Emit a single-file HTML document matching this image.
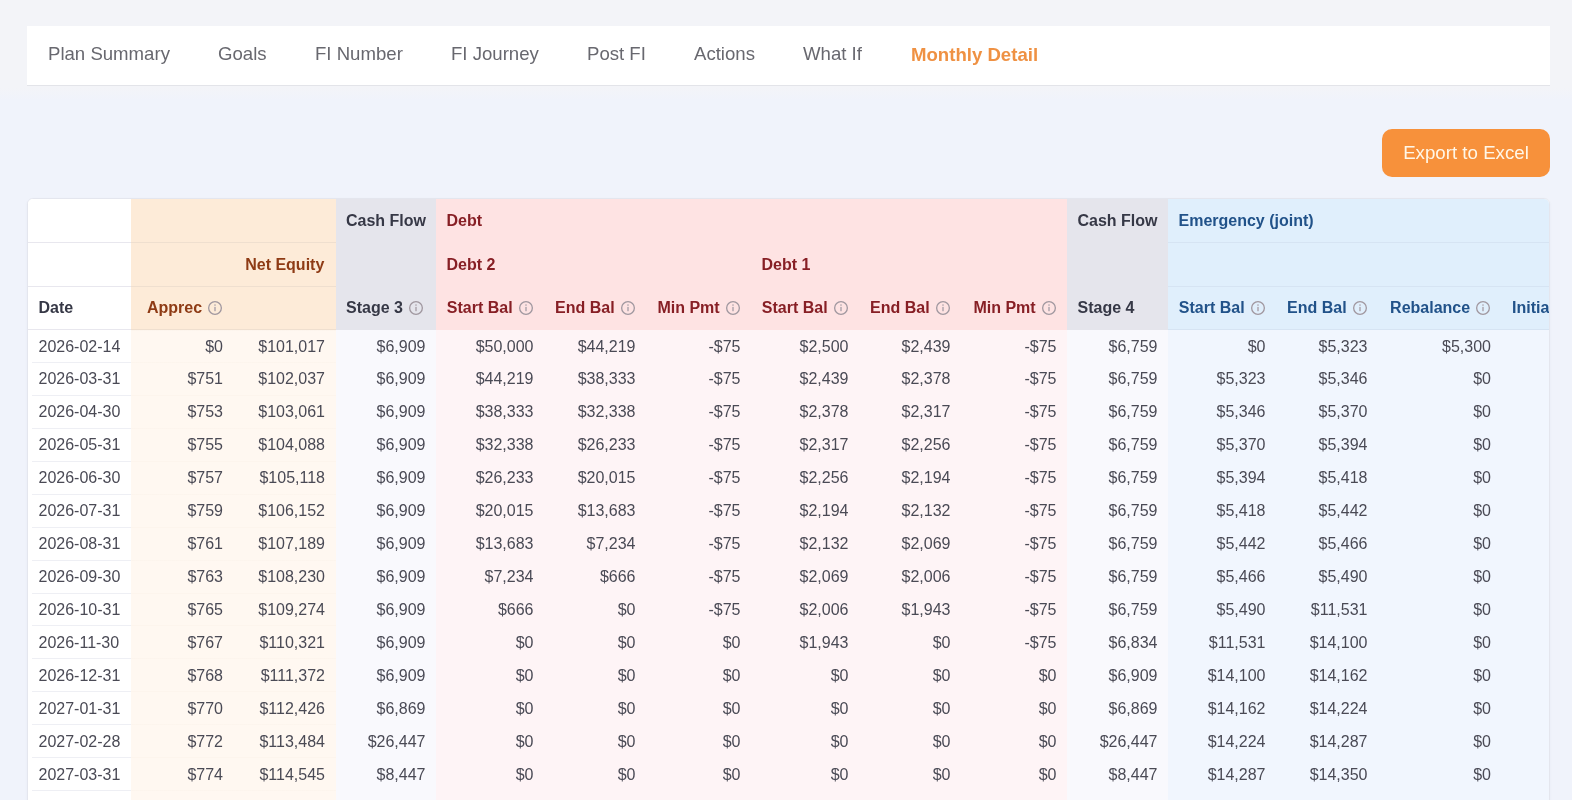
<!DOCTYPE html><html><head><meta charset="utf-8"><style>
*{box-sizing:border-box;margin:0;padding:0}
html,body{width:1572px;height:800px;overflow:hidden}
body{will-change:transform;background:linear-gradient(#f3f4f8 0,#f3f4f8 88px,#f0f3fb 100px,#f0f3fb 100%);font-family:"Liberation Sans",sans-serif;position:relative;color:#4a4a55}
.nav{position:absolute;left:27px;top:26px;width:1523px;height:60px;background:#fff;border-bottom:1px solid #e3e4e9}
.nav span{position:absolute;top:-2px;line-height:59px;font-size:18.6px;color:#68686f;white-space:nowrap}
.nav span.act{color:#ef9143;font-weight:bold;top:-1px}
.btn{position:absolute;left:1382px;top:129px;width:168px;height:48px;border-radius:10px;background:#f7913b;color:#fff7e8;font-size:18.7px;line-height:47px;text-align:center}
.card{position:absolute;left:27px;top:198px;width:1523px;height:620px;border:1px solid #e4e6ee;border-radius:6px;box-shadow:0 1px 3px rgba(40,40,80,0.04);background:#fff;overflow:hidden}
table{position:absolute;left:0;top:0;border-collapse:collapse;table-layout:fixed;width:1572.0px}
th,td{padding:0 10.5px;white-space:nowrap;font-size:16px}
td{overflow:hidden}
th{height:44px;font-weight:bold;text-align:right;padding-right:11.2px}
thead tr.r1 th{height:43px;padding-top:1px}
thead tr.r2 th{padding-top:2px}
th.l{text-align:left}
thead tr.r1 th, thead tr.r2 th{border-bottom:1px solid #e6e8ee}
thead tr.r3 th{border-bottom:1px solid #e3e5ec;height:43px}
td{padding-top:2px}
thead th.cf{border-bottom-color:#e5e5ec !important}
thead th.ne{border-bottom-color:#efdfcf !important}
thead th.em{border-bottom-color:#d6e4f3 !important}
thead th.d{border-bottom-color:#e8e7ee !important}
thead th.db{border-bottom-color:#fee3e3 !important}
td{height:32.95px;text-align:right}
td.dt{text-align:left;background:linear-gradient(#eeeff4,#eeeff4) no-repeat 4px 0 / calc(100% - 4px) 1px,#fff}
th.d{background:#fff;color:#363846}
th.ne{background:#fdebd8;color:#8e3b15}
th.cf{background:#e5e5ec;color:#363846}
th.db{background:#fee3e3;color:#871f25}
th.em{background:#e0effc;color:#215289}
tbody tr:first-child td.dt{background:#fff}
td.ne{background:linear-gradient(rgba(120,60,0,0.015),rgba(120,60,0,0.015)) no-repeat 0 0 / 100% 1px,#fff8f1}
td.cf{background:#f9f9fd}
td.db{background:#fef4f6}
td.em{background:#f1f6fe}
.ic{display:inline-block;width:14px;height:14px;margin-left:6.2px;vertical-align:-2px}
</style></head><body>
<div class="nav">
<span style="left:21px">Plan Summary</span>
<span style="left:191px">Goals</span>
<span style="left:288px">FI Number</span>
<span style="left:424px">FI Journey</span>
<span style="left:560px">Post FI</span>
<span style="left:667px">Actions</span>
<span style="left:776px">What If</span>
<span class="act" style="left:884px">Monthly Detail</span>
</div>
<div class="btn">Export to Excel</div>
<div class="card"><table><colgroup>
<col style="width:103px">
<col style="width:102.5px">
<col style="width:102.0px">
<col style="width:100.5px">
<col style="width:108px">
<col style="width:102px">
<col style="width:105px">
<col style="width:108px">
<col style="width:102px">
<col style="width:106px">
<col style="width:101px">
<col style="width:108px">
<col style="width:102px">
<col style="width:123.5px">
<col style="width:98.5px">
</colgroup><thead>
<tr class="r1"><th class="d"></th><th class="ne"></th><th class="ne"></th><th class="cf l">Cash Flow</th><th class="db l">Debt</th><th class="db"></th><th class="db"></th><th class="db"></th><th class="db"></th><th class="db"></th><th class="cf l">Cash Flow</th><th class="em l">Emergency (joint)</th><th class="em"></th><th class="em"></th><th class="em"></th></tr>
<tr class="r2"><th class="d"></th><th class="ne"></th><th class="ne">Net Equity</th><th class="cf"></th><th class="db l">Debt 2</th><th class="db"></th><th class="db"></th><th class="db l">Debt 1</th><th class="db"></th><th class="db"></th><th class="cf"></th><th class="em"></th><th class="em"></th><th class="em"></th><th class="em"></th></tr>
<tr class="r3"><th class="d l">Date</th><th class="ne">Apprec<svg class="ic" width="14" height="14" viewBox="0 0 14 14"><circle cx="7" cy="7" r="6.35" fill="none" stroke="#a0979f" stroke-width="1.3"/><rect x="6.3" y="5.9" width="1.4" height="4.3" fill="#aaa2aa"/><circle cx="7" cy="4.1" r="0.8" fill="#aaa2aa"/></svg></th><th class="ne"></th><th class="cf l">Stage 3<svg class="ic" width="14" height="14" viewBox="0 0 14 14"><circle cx="7" cy="7" r="6.35" fill="none" stroke="#a0979f" stroke-width="1.3"/><rect x="6.3" y="5.9" width="1.4" height="4.3" fill="#aaa2aa"/><circle cx="7" cy="4.1" r="0.8" fill="#aaa2aa"/></svg></th><th class="db">Start Bal<svg class="ic" width="14" height="14" viewBox="0 0 14 14"><circle cx="7" cy="7" r="6.35" fill="none" stroke="#a0979f" stroke-width="1.3"/><rect x="6.3" y="5.9" width="1.4" height="4.3" fill="#aaa2aa"/><circle cx="7" cy="4.1" r="0.8" fill="#aaa2aa"/></svg></th><th class="db">End Bal<svg class="ic" width="14" height="14" viewBox="0 0 14 14"><circle cx="7" cy="7" r="6.35" fill="none" stroke="#a0979f" stroke-width="1.3"/><rect x="6.3" y="5.9" width="1.4" height="4.3" fill="#aaa2aa"/><circle cx="7" cy="4.1" r="0.8" fill="#aaa2aa"/></svg></th><th class="db">Min Pmt<svg class="ic" width="14" height="14" viewBox="0 0 14 14"><circle cx="7" cy="7" r="6.35" fill="none" stroke="#a0979f" stroke-width="1.3"/><rect x="6.3" y="5.9" width="1.4" height="4.3" fill="#aaa2aa"/><circle cx="7" cy="4.1" r="0.8" fill="#aaa2aa"/></svg></th><th class="db">Start Bal<svg class="ic" width="14" height="14" viewBox="0 0 14 14"><circle cx="7" cy="7" r="6.35" fill="none" stroke="#a0979f" stroke-width="1.3"/><rect x="6.3" y="5.9" width="1.4" height="4.3" fill="#aaa2aa"/><circle cx="7" cy="4.1" r="0.8" fill="#aaa2aa"/></svg></th><th class="db">End Bal<svg class="ic" width="14" height="14" viewBox="0 0 14 14"><circle cx="7" cy="7" r="6.35" fill="none" stroke="#a0979f" stroke-width="1.3"/><rect x="6.3" y="5.9" width="1.4" height="4.3" fill="#aaa2aa"/><circle cx="7" cy="4.1" r="0.8" fill="#aaa2aa"/></svg></th><th class="db">Min Pmt<svg class="ic" width="14" height="14" viewBox="0 0 14 14"><circle cx="7" cy="7" r="6.35" fill="none" stroke="#a0979f" stroke-width="1.3"/><rect x="6.3" y="5.9" width="1.4" height="4.3" fill="#aaa2aa"/><circle cx="7" cy="4.1" r="0.8" fill="#aaa2aa"/></svg></th><th class="cf l">Stage 4</th><th class="em">Start Bal<svg class="ic" width="14" height="14" viewBox="0 0 14 14"><circle cx="7" cy="7" r="6.35" fill="none" stroke="#a0979f" stroke-width="1.3"/><rect x="6.3" y="5.9" width="1.4" height="4.3" fill="#aaa2aa"/><circle cx="7" cy="4.1" r="0.8" fill="#aaa2aa"/></svg></th><th class="em">End Bal<svg class="ic" width="14" height="14" viewBox="0 0 14 14"><circle cx="7" cy="7" r="6.35" fill="none" stroke="#a0979f" stroke-width="1.3"/><rect x="6.3" y="5.9" width="1.4" height="4.3" fill="#aaa2aa"/><circle cx="7" cy="4.1" r="0.8" fill="#aaa2aa"/></svg></th><th class="em">Rebalance<svg class="ic" width="14" height="14" viewBox="0 0 14 14"><circle cx="7" cy="7" r="6.35" fill="none" stroke="#a0979f" stroke-width="1.3"/><rect x="6.3" y="5.9" width="1.4" height="4.3" fill="#aaa2aa"/><circle cx="7" cy="4.1" r="0.8" fill="#aaa2aa"/></svg></th><th class="em l">Initial Bal<svg class="ic" width="14" height="14" viewBox="0 0 14 14"><circle cx="7" cy="7" r="6.35" fill="none" stroke="#a0979f" stroke-width="1.3"/><rect x="6.3" y="5.9" width="1.4" height="4.3" fill="#aaa2aa"/><circle cx="7" cy="4.1" r="0.8" fill="#aaa2aa"/></svg></th></tr>
</thead><tbody>
<tr><td class="d dt">2026-02-14</td><td class="ne">$0</td><td class="ne">$101,017</td><td class="cf">$6,909</td><td class="db">$50,000</td><td class="db">$44,219</td><td class="db">-$75</td><td class="db">$2,500</td><td class="db">$2,439</td><td class="db">-$75</td><td class="cf">$6,759</td><td class="em">$0</td><td class="em">$5,323</td><td class="em">$5,300</td><td class="em"></td></tr>
<tr><td class="d dt">2026-03-31</td><td class="ne">$751</td><td class="ne">$102,037</td><td class="cf">$6,909</td><td class="db">$44,219</td><td class="db">$38,333</td><td class="db">-$75</td><td class="db">$2,439</td><td class="db">$2,378</td><td class="db">-$75</td><td class="cf">$6,759</td><td class="em">$5,323</td><td class="em">$5,346</td><td class="em">$0</td><td class="em"></td></tr>
<tr><td class="d dt">2026-04-30</td><td class="ne">$753</td><td class="ne">$103,061</td><td class="cf">$6,909</td><td class="db">$38,333</td><td class="db">$32,338</td><td class="db">-$75</td><td class="db">$2,378</td><td class="db">$2,317</td><td class="db">-$75</td><td class="cf">$6,759</td><td class="em">$5,346</td><td class="em">$5,370</td><td class="em">$0</td><td class="em"></td></tr>
<tr><td class="d dt">2026-05-31</td><td class="ne">$755</td><td class="ne">$104,088</td><td class="cf">$6,909</td><td class="db">$32,338</td><td class="db">$26,233</td><td class="db">-$75</td><td class="db">$2,317</td><td class="db">$2,256</td><td class="db">-$75</td><td class="cf">$6,759</td><td class="em">$5,370</td><td class="em">$5,394</td><td class="em">$0</td><td class="em"></td></tr>
<tr><td class="d dt">2026-06-30</td><td class="ne">$757</td><td class="ne">$105,118</td><td class="cf">$6,909</td><td class="db">$26,233</td><td class="db">$20,015</td><td class="db">-$75</td><td class="db">$2,256</td><td class="db">$2,194</td><td class="db">-$75</td><td class="cf">$6,759</td><td class="em">$5,394</td><td class="em">$5,418</td><td class="em">$0</td><td class="em"></td></tr>
<tr><td class="d dt">2026-07-31</td><td class="ne">$759</td><td class="ne">$106,152</td><td class="cf">$6,909</td><td class="db">$20,015</td><td class="db">$13,683</td><td class="db">-$75</td><td class="db">$2,194</td><td class="db">$2,132</td><td class="db">-$75</td><td class="cf">$6,759</td><td class="em">$5,418</td><td class="em">$5,442</td><td class="em">$0</td><td class="em"></td></tr>
<tr><td class="d dt">2026-08-31</td><td class="ne">$761</td><td class="ne">$107,189</td><td class="cf">$6,909</td><td class="db">$13,683</td><td class="db">$7,234</td><td class="db">-$75</td><td class="db">$2,132</td><td class="db">$2,069</td><td class="db">-$75</td><td class="cf">$6,759</td><td class="em">$5,442</td><td class="em">$5,466</td><td class="em">$0</td><td class="em"></td></tr>
<tr><td class="d dt">2026-09-30</td><td class="ne">$763</td><td class="ne">$108,230</td><td class="cf">$6,909</td><td class="db">$7,234</td><td class="db">$666</td><td class="db">-$75</td><td class="db">$2,069</td><td class="db">$2,006</td><td class="db">-$75</td><td class="cf">$6,759</td><td class="em">$5,466</td><td class="em">$5,490</td><td class="em">$0</td><td class="em"></td></tr>
<tr><td class="d dt">2026-10-31</td><td class="ne">$765</td><td class="ne">$109,274</td><td class="cf">$6,909</td><td class="db">$666</td><td class="db">$0</td><td class="db">-$75</td><td class="db">$2,006</td><td class="db">$1,943</td><td class="db">-$75</td><td class="cf">$6,759</td><td class="em">$5,490</td><td class="em">$11,531</td><td class="em">$0</td><td class="em"></td></tr>
<tr><td class="d dt">2026-11-30</td><td class="ne">$767</td><td class="ne">$110,321</td><td class="cf">$6,909</td><td class="db">$0</td><td class="db">$0</td><td class="db">$0</td><td class="db">$1,943</td><td class="db">$0</td><td class="db">-$75</td><td class="cf">$6,834</td><td class="em">$11,531</td><td class="em">$14,100</td><td class="em">$0</td><td class="em"></td></tr>
<tr><td class="d dt">2026-12-31</td><td class="ne">$768</td><td class="ne">$111,372</td><td class="cf">$6,909</td><td class="db">$0</td><td class="db">$0</td><td class="db">$0</td><td class="db">$0</td><td class="db">$0</td><td class="db">$0</td><td class="cf">$6,909</td><td class="em">$14,100</td><td class="em">$14,162</td><td class="em">$0</td><td class="em"></td></tr>
<tr><td class="d dt">2027-01-31</td><td class="ne">$770</td><td class="ne">$112,426</td><td class="cf">$6,869</td><td class="db">$0</td><td class="db">$0</td><td class="db">$0</td><td class="db">$0</td><td class="db">$0</td><td class="db">$0</td><td class="cf">$6,869</td><td class="em">$14,162</td><td class="em">$14,224</td><td class="em">$0</td><td class="em"></td></tr>
<tr><td class="d dt">2027-02-28</td><td class="ne">$772</td><td class="ne">$113,484</td><td class="cf">$26,447</td><td class="db">$0</td><td class="db">$0</td><td class="db">$0</td><td class="db">$0</td><td class="db">$0</td><td class="db">$0</td><td class="cf">$26,447</td><td class="em">$14,224</td><td class="em">$14,287</td><td class="em">$0</td><td class="em"></td></tr>
<tr><td class="d dt">2027-03-31</td><td class="ne">$774</td><td class="ne">$114,545</td><td class="cf">$8,447</td><td class="db">$0</td><td class="db">$0</td><td class="db">$0</td><td class="db">$0</td><td class="db">$0</td><td class="db">$0</td><td class="cf">$8,447</td><td class="em">$14,287</td><td class="em">$14,350</td><td class="em">$0</td><td class="em"></td></tr>
<tr><td class="d dt">2027-04-30</td><td class="ne">$776</td><td class="ne">$115,609</td><td class="cf">$8,447</td><td class="db">$0</td><td class="db">$0</td><td class="db">$0</td><td class="db">$0</td><td class="db">$0</td><td class="db">$0</td><td class="cf">$8,447</td><td class="em">$14,350</td><td class="em">$14,413</td><td class="em">$0</td><td class="em"></td></tr>
</tbody></table></div></body></html>
